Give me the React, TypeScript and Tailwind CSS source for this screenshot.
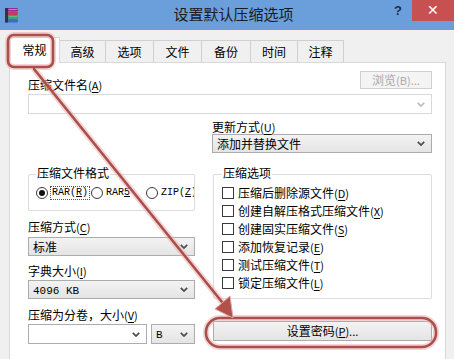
import React from "react";

function Chevron({ light }: { light?: boolean }) {
  return (
    <svg width="8" height="5" viewBox="0 0 8 5" className="shrink-0">
      <path
        d="M0.8 0.8 L4 4 L7.2 0.8"
        fill="none"
        stroke={light ? "#bdbdbd" : "#4a4a4a"}
        strokeWidth="1.7"
      />
    </svg>
  );
}

function Select({ children, className }: { children?: React.ReactNode; className: string }) {
  return (
    <div
      className={`flex items-center justify-between border border-[#acacac] bg-linear-to-b from-[#f3f3f3] to-[#e4e4e4] pl-[4px] pr-[6px] ${className}`}
    >
      <span className="leading-[14px]">{children}</span>
      <Chevron />
    </div>
  );
}

function Radio({ checked, children, className }: { checked?: boolean; children: React.ReactNode; className: string }) {
  return (
    <div className={`flex items-center shrink-0 ${className}`}>
      <span className="w-[12px] h-[12px] rounded-full border border-[#3a3a3a] bg-white flex items-center justify-center shrink-0">
        {checked && <span className="w-[6px] h-[6px] rounded-full bg-[#111]" />}
      </span>
      {children}
    </div>
  );
}

function Check({ children }: { children: React.ReactNode }) {
  return (
    <div className="flex items-center h-[18px]">
      <span className="w-[12px] h-[12px] border border-[#3a3a3a] bg-white shrink-0" />
      <span className="ml-[4px] leading-[14px] whitespace-nowrap">{children}</span>
    </div>
  );
}

function Key({ k }: { k: string }) {
  return (
    <span className="text-[11px]">
      (<span className="underline underline-offset-2">{k}</span>)
    </span>
  );
}

function WinRarIcon() {
  return (
    <svg width="17" height="17" viewBox="0 0 17 17">
      <rect x="2" y="1" width="13" height="3.5" rx="1.2" fill="#8b2f92" />
      <rect x="2" y="4.8" width="13" height="3.2" rx="1.2" fill="#c23a62" />
      <rect x="2" y="8.3" width="13" height="3.3" rx="1.2" fill="#2f9a55" />
      <rect x="2" y="11.9" width="13" height="3.6" rx="1.2" fill="#3e6fb8" />
      <rect x="2" y="1" width="3" height="14.5" fill="#2a2a2a" opacity="0.85" />
      <rect x="5.5" y="2" width="9" height="1" fill="#e9b6e6" opacity="0.6" />
      <rect x="5.5" y="9.2" width="9" height="1" fill="#9be0b0" opacity="0.6" />
    </svg>
  );
}

const tabs = [
  { t: "常规", w: "w-[51px]" },
  { t: "高级", w: "w-[46px]" },
  { t: "选项", w: "w-[48px]" },
  { t: "文件", w: "w-[48px]" },
  { t: "备份", w: "w-[49px]" },
  { t: "时间", w: "w-[47px]" },
  { t: "注释", w: "w-[46px]" },
];

export default function App() {
  return (
    <div className="relative w-[454px] h-[359px] overflow-hidden bg-[#f0f0f0] text-[12px] text-black font-['Noto_Sans_CJK_SC','Noto_Sans',sans-serif]">
      {/* Title bar */}
      <div className="flex h-[30px] bg-[#6b9fdb]">
        <div className="w-[73px] pl-[3px] pt-[7px]">
          <WinRarIcon />
        </div>
        <div className="flex-1 flex justify-center pt-[4px] text-[15px] leading-[20px] text-[#1b1b1b]">
          设置默认压缩选项
        </div>
        <div className="w-[60px] flex items-start">
          <span className="w-[18px] mt-[3px] text-[13px] font-bold leading-[16px] text-[#1d2d52] font-['Liberation_Sans',sans-serif]">
            ?
          </span>
          <div className="w-[42px] h-[21px] bg-[#c75050] flex items-center justify-center text-white text-[14px] font-['Liberation_Sans',sans-serif]">
            ✕
          </div>
        </div>
      </div>

      {/* Content */}
      <div className="pl-[9px] pr-[8px] pt-[7px]">
        {/* Tabs */}
        <div className="flex items-end h-[25px]">
          {tabs.map((tab, i) =>
            i === 0 ? (
              <div
                key={tab.t}
                className={`${tab.w} h-[26px] -mb-px relative z-10 bg-white border border-b-0 border-[#d9d9d9] flex items-center justify-center pb-[2px]`}
              >
                {tab.t}
              </div>
            ) : (
              <div
                key={tab.t}
                className={`${tab.w} h-[22px] bg-[#f0f0f0] border border-l-0 border-b-0 border-[#d0d0d0] flex items-center justify-center`}
              >
                {tab.t}
              </div>
            )
          )}
        </div>

        {/* Panel */}
        <div className="h-[300px] border border-[#d9d9d9] bg-white pl-[18px] pr-[13px] pt-[8px]">
          <div className="flex justify-between items-start h-[23px]">
            <span className="mt-[7px] leading-[14px]">
              压缩文件名<Key k="A" />
            </span>
            <div className="w-[72px] h-[18px] border border-[#d0d0d0] bg-[#f4f4f4] text-[#a8a8a8] flex items-center justify-center leading-[14px]">
              浏览<span className="text-[11px]">(B)...</span>
            </div>
          </div>
          <div className="h-[20px] border border-[#d9d9d9] bg-white flex items-center justify-end pr-[6px]">
            <Chevron light />
          </div>

          <div className="ml-auto w-[220px] mt-[6px]">
            <div className="leading-[14px]">
              更新方式<Key k="U" />
            </div>
            <Select className="h-[19px] mt-[0px]">添加并替换文件</Select>
          </div>

          <div className="grid grid-cols-[167px_219px] gap-x-[18px] mt-[21px]">
            {/* Left column */}
            <div className="flex flex-col">
              <div className="relative h-[37px] border border-[#dcdcdc] rounded-[2px]">
                <span className="absolute -top-[9px] left-[7px] bg-white px-[1px] leading-[14px] whitespace-nowrap">
                  压缩文件格式
                </span>
                <div className="flex items-center h-full pl-[7px] overflow-hidden">
                  <Radio checked className="w-[55px]">
                    <span className="ml-[3px] text-[10px] leading-[12px] font-['Liberation_Mono',monospace] outline-1 outline-dotted outline-[#555] px-[1px] whitespace-nowrap">
                      RAR(<span className="underline">R</span>)
                    </span>
                  </Radio>
                  <Radio className="w-[55px]">
                    <span className="ml-[3px] text-[10px] leading-[12px] font-['Liberation_Mono',monospace] whitespace-nowrap">
                      RAR<span className="underline">5</span>
                    </span>
                  </Radio>
                  <Radio className="">
                    <span className="ml-[3px] text-[10px] leading-[12px] font-['Liberation_Mono',monospace] whitespace-nowrap">
                      ZIP(<span className="underline">Z</span>)
                    </span>
                  </Radio>
                </div>
              </div>

              <div className="mt-[9px] leading-[14px]">
                压缩方式<Key k="C" />
              </div>
              <Select className="h-[19px] mt-[3px]">标准</Select>

              <div className="mt-[8px] leading-[14px]">
                字典大小<Key k="I" />
              </div>
              <Select className="h-[19px] mt-[2px]">
                <span className="text-[11px] font-['Liberation_Mono',monospace]">4096 KB</span>
              </Select>

              <div className="mt-[9px] leading-[14px]">
                压缩为分卷，大小<Key k="V" />
              </div>
              <div className="flex gap-[4px] mt-[2px]">
                <div className="w-[119px] h-[20px] border border-[#abadb3] bg-white flex items-center justify-end pr-[6px]">
                  <Chevron />
                </div>
                <Select className="flex-1 h-[20px]">
                  <span className="text-[11px] font-['Liberation_Mono',monospace]">B</span>
                </Select>
              </div>
            </div>

            {/* Right column */}
            <div className="flex flex-col">
              <div className="relative h-[125px] border border-[#dcdcdc] rounded-[2px] pl-[8px] pt-[9px]">
                <span className="absolute -top-[9px] left-[8px] bg-white px-[1px] leading-[14px]">
                  压缩选项
                </span>
                <Check>
                  压缩后删除源文件<Key k="D" />
                </Check>
                <Check>
                  创建自解压格式压缩文件<Key k="X" />
                </Check>
                <Check>
                  创建固实压缩文件<Key k="S" />
                </Check>
                <Check>
                  添加恢复记录<Key k="E" />
                </Check>
                <Check>
                  测试压缩文件<Key k="T" />
                </Check>
                <Check>
                  锁定压缩文件<Key k="L" />
                </Check>
              </div>
              <div className="mt-[22px] h-[20px] border border-[#acacac] bg-linear-to-b from-[#f3f3f3] to-[#e4e4e4] flex items-center justify-center leading-[14px]">
                设置密码<span className="text-[11px]">(<span className="underline">P</span>)...</span>
              </div>
            </div>
          </div>
        </div>
      </div>

      {/* Annotation overlay */}
      <svg className="absolute inset-0 pointer-events-none z-20" width="454" height="359" viewBox="0 0 454 359">
        <g fill="none" stroke="#e9b3b1" strokeWidth="6" opacity="0.55" strokeLinecap="round">
          <rect x="8" y="35" width="45" height="32" rx="6" />
          <line x1="34" y1="69" x2="222" y2="302" />
          <rect x="206" y="318" width="230" height="29" rx="14" />
        </g>
        <g fill="none" stroke="#ab4f4c" strokeWidth="2.6" strokeLinecap="round">
          <rect x="8" y="35" width="45" height="32" rx="6" />
          <line x1="34" y1="69" x2="222" y2="302" />
          <rect x="206" y="318" width="230" height="29" rx="14" />
        </g>
        <polygon points="233,318 215,309 230,296" fill="#b2504c" stroke="#e2a4a2" strokeWidth="1" />
      </svg>
    </div>
  );
}
